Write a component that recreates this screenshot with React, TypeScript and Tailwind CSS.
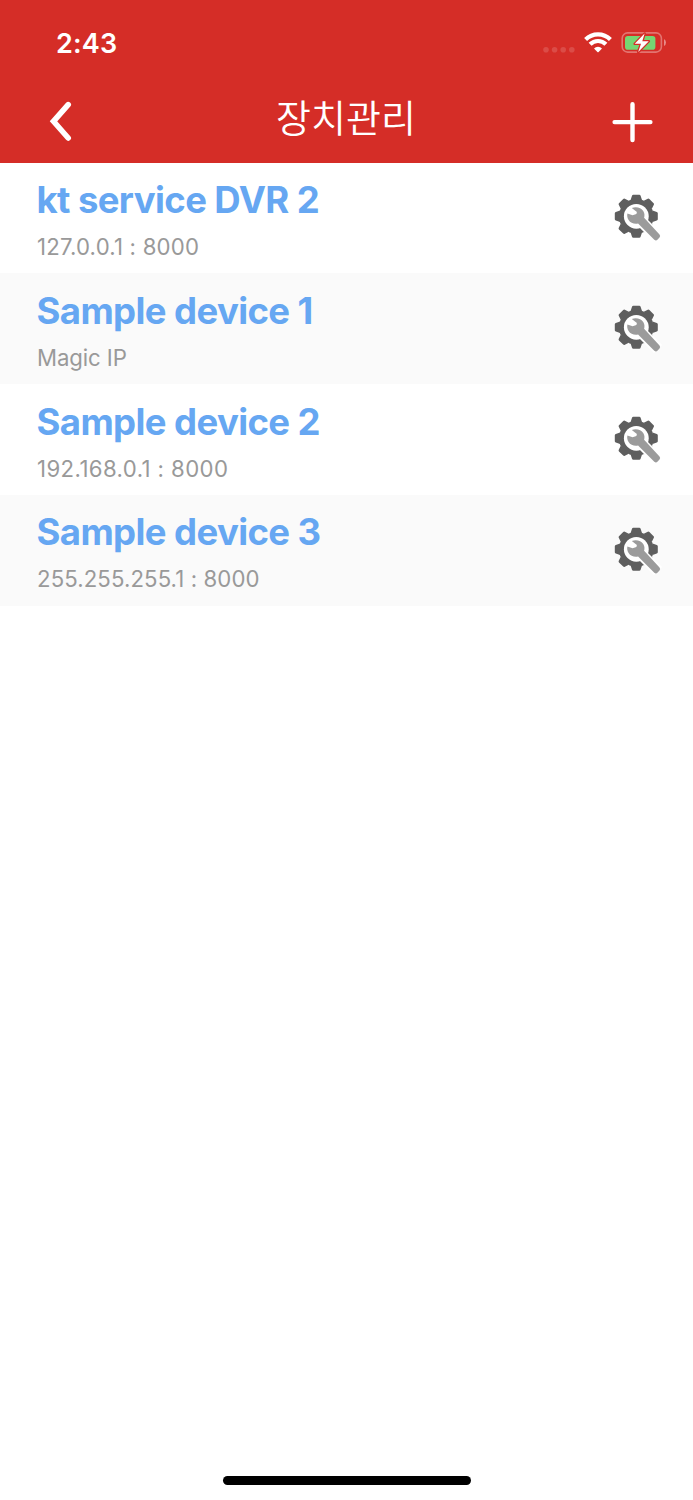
const devices = [
  { name: "kt service DVR 2", address: "127.0.0.1 : 8000", tracking: "tracking-[0.2px]" },
  { name: "Sample device 1", address: "Magic IP", tracking: "tracking-[-0.1px]" },
  { name: "Sample device 2", address: "192.168.0.1 : 8000", tracking: "tracking-[0.4px]" },
  { name: "Sample device 3", address: "255.255.255.1 : 8000", tracking: "tracking-[0.1px]" },
];

const teeth = [0, 45, 90, 135, 180, 225, 270, 315];

function DeviceSettingsIcon() {
  return (
    <svg width="48" height="48" viewBox="0 0 48 48" aria-hidden="true">
      <g fill="#5e5e5e">
        <circle cx="22.3" cy="22.3" r="17.4" />
        {teeth.map((angle) => (
          <path
            key={angle}
            d="M16.6 6 L18 1.8 Q18.3 0.8 19.3 0.8 H25.3 Q26.3 0.8 26.6 1.8 L28 6Z"
            transform={`rotate(${angle} 22.3 22.3)`}
          />
        ))}
      </g>
      <circle cx="22.3" cy="22.3" r="12.4" fill="#fff" />
      {/* gap between the gear and the wrench handle */}
      <path d="M25 25 L44 44" stroke="#fff" strokeWidth="11.4" />
      <path
        d="M13.4 19.5 L18.6 21.2 L22.4 20 L22.9 18 L17.8 13.9 C22.2 12.5 27.2 13.5 29.4 17.2 C30.7 19.3 30.7 21.8 30.1 23.8 L45.5 40.6 Q46.8 42.2 45.5 43.6 L43.4 45.8 Q41.9 47 40.3 45.7 L24.1 29.6 C20.3 30.4 16.5 29.1 14.6 26 C13.3 23.9 12.9 21.7 13.4 19.5Z"
        fill="#9b9b9b"
      />
    </svg>
  );
}

function StatusIcons() {
  return (
    <svg width="126" height="24" viewBox="0 0 126 24" aria-hidden="true">
      <g fill="#fff" fillOpacity="0.15">
        <circle cx="6" cy="19.7" r="2.8" />
        <circle cx="14.6" cy="19.7" r="2.8" />
        <circle cx="23.2" cy="19.7" r="2.8" />
        <circle cx="31.8" cy="19.7" r="2.8" />
      </g>
      <g fill="none" stroke="#fff" strokeWidth="4.2">
        <path d="M45.6 9.4 A17.6 17.6 0 0 1 70.4 9.4" />
        <path d="M50.1 14.3 A11.1 11.1 0 0 1 65.9 14.3" />
      </g>
      <path d="M54 18.4 A5.8 5.8 0 0 1 62 18.4 L58.6 22.1 Q58 22.6 57.4 22.1Z" fill="#fff" />
      <rect x="82.2" y="2.9" width="39.2" height="19.2" rx="5.4" fill="none" stroke="#fff" strokeOpacity="0.34" strokeWidth="1.6" />
      <path d="M124 8.9 Q126 10.2 126 12.5 Q126 14.8 124 16.1Z" fill="#fff" fillOpacity="0.45" />
      <rect x="85" y="5.9" width="30.4" height="13.8" rx="2.8" fill="#76d672" />
      <path
        d="M104.6 3.6 L94.7 13.8 H101 L98.2 22 L108.8 11.2 H102.3Z"
        fill="#fff"
        stroke="#d52d27"
        strokeWidth="2.6"
        strokeLinejoin="round"
        paintOrder="stroke"
      />
    </svg>
  );
}

export default function App() {
  return (
    <div className="flex h-[1500px] w-[693px] flex-col bg-white font-['Inter',sans-serif]">
      <header className="h-[162.6px] bg-[#d52d27] text-white">
        <div className="flex h-[84px] items-start justify-between pt-[30px] pr-[27px] pl-[56px]">
          <span className="text-[27px] leading-[27px] font-semibold tracking-[0.2px]">2:43</span>
          <StatusIcons />
        </div>
        <div className="flex h-[76px] items-center justify-between pr-[38px] pl-[46px]">
          <button type="button" aria-label="뒤로" className="w-[46px]">
            <svg width="30" height="44" viewBox="0 0 30 44" fill="none" stroke="#fff" strokeWidth="5.6" strokeLinecap="round" strokeLinejoin="miter">
              <path d="M22.2 4.6 L7.5 21.3 L22.2 38" />
            </svg>
          </button>
          <h1 className="mr-[9px] pb-[12px] font-['Noto_Sans_CJK_KR',sans-serif] text-[38px] leading-[44px] font-[350]">
            장치관리
          </h1>
          <button type="button" aria-label="추가" className="w-[46px]">
            <svg width="46" height="46" viewBox="0 0 46 46" fill="none" stroke="#fff" strokeWidth="4.4" strokeLinecap="round">
              <path d="M23.5 5.2 V41 M5.6 23.1 H41.4" />
            </svg>
          </button>
        </div>
      </header>

      <ul>
        {devices.map((device) => (
          <li
            key={device.name}
            className="flex h-[110.8px] items-center justify-between bg-white pr-[31px] pl-[36.5px] even:bg-[#fafafa]"
          >
            <div className="pt-[2px]">
              <p className="text-[36.5px] leading-[46px] font-bold tracking-[-0.6px] text-[#66a7f2]">{device.name}</p>
              <p className={`mt-[10px] pl-[0.5px] text-[22.2px] leading-[28px] text-[#999] ${device.tracking}`}>
                {device.address}
              </p>
            </div>
            <button type="button" aria-label="설정" className="pt-px">
              <DeviceSettingsIcon />
            </button>
          </li>
        ))}
      </ul>

      <div className="mt-auto mb-[15px] h-[9.5px] w-[248px] self-center rounded-full bg-black" />
    </div>
  );
}
